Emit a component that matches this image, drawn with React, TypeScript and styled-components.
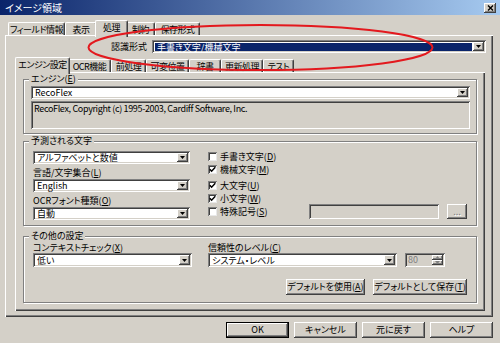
import React from "react";
import styled, { createGlobalStyle, css } from "styled-components";

const GlobalStyle = createGlobalStyle`
  * { box-sizing: border-box; }
  html, body { margin: 0; padding: 0; background: #d4d0c8; }
  body {
    font-family: "Noto Sans CJK JP", "Liberation Sans", sans-serif;
    font-size: 9px;
    color: #000;
    font-feature-settings: "palt" 1;
  }
  u { text-underline-offset: 1px; }
`;

const raised = css`
  background: #d4d0c8;
  box-shadow: inset -1px -1px #404040, inset 1px 1px #ffffff, inset -2px -2px #808080;
`;

const sunken = css`
  box-shadow: inset 1px 1px #808080, inset -1px -1px #ffffff, inset 2px 2px #404040,
    inset -2px -2px #d4d0c8;
`;

const Window = styled.div`
  position: relative;
  width: 500px;
  height: 343px;
  overflow: hidden;
  background: #d4d0c8;
  display: flex;
  flex-direction: column;
`;

const TitleBar = styled.div`
  flex: none;
  height: 15px;
  display: flex;
  align-items: center;
  justify-content: space-between;
  padding: 0 4px 0 5px;
  background: linear-gradient(90deg, #0a246a 0%, #a6caf0 100%);
  color: #fff;
  font-size: 10px;
  line-height: 15px;
`;

const CloseButton = styled.div`
  width: 12px;
  height: 10px;
  ${raised}
  display: flex;
  align-items: center;
  justify-content: center;
`;

const Body = styled.div`
  flex: 1;
  display: flex;
  flex-direction: column;
  padding: 5px 7px 0 5px;
`;

const TabStrip = styled.div<{ $pl: number; $mt?: number }>`
  flex: none;
  display: flex;
  align-items: flex-end;
  height: 15px;
  padding-left: ${(p) => p.$pl}px;
  margin-top: ${(p) => p.$mt ?? 0}px;
`;

const Tab = styled.div<{ $w: number; $active?: boolean }>`
  flex: none;
  display: flex;
  align-items: center;
  justify-content: center;
  white-space: nowrap;
  line-height: 11px;
  letter-spacing: -0.5px;
  background: #d4d0c8;
  border-top: 1px solid #fff;
  border-left: 1px solid #fff;
  border-right: 1px solid #404040;
  box-shadow: inset -1px 0 #808080;
  border-radius: 2px 2px 0 0;
  width: ${(p) => p.$w}px;
  height: 13px;
  ${(p) =>
    p.$active &&
    css`
      position: relative;
      z-index: 1;
      width: ${p.$w + 4}px;
      height: 17px;
      margin: 0 -2px -2px;
      padding-bottom: 3px;
    `}
`;

const Panel = styled.div<{ $pad: string; $h?: number }>`
  display: flex;
  flex-direction: column;
  ${(p) => (p.$h ? `height: ${p.$h}px; flex: none;` : `flex: 1;`)}
  padding: ${(p) => p.$pad};
  box-shadow: inset 1px 1px #fff, inset -1px -1px #404040, inset -2px -2px #808080;
`;

const FormatRow = styled.div`
  flex: none;
  display: flex;
  justify-content: flex-end;
  align-items: center;
  gap: 5px;
  height: 13px;
  margin-right: -1px;
  white-space: nowrap;
`;

const ComboBox = styled.div<{ $w?: number; $h: number }>`
  flex: none;
  display: flex;
  align-items: stretch;
  width: ${(p) => (p.$w ? `${p.$w}px` : "auto")};
  height: ${(p) => p.$h}px;
  padding: 2px;
  background: #fff;
  ${sunken}
`;

const ComboValue = styled.div<{ $sel?: boolean }>`
  flex: 1;
  min-width: 0;
  display: flex;
  align-items: center;
  padding: 0 2px;
  white-space: nowrap;
  line-height: 9px;
  ${(p) =>
    p.$sel &&
    css`
      background: #0a246a;
      color: #fff;
      margin: 1px 1px 0 1px;
    `}
`;

const ComboArrow = styled.div`
  flex: none;
  width: 11px;
  ${raised}
  display: flex;
  align-items: center;
  justify-content: center;
`;

const InfoBox = styled.div`
  flex: none;
  height: 28px;
  margin-top: 2px;
  padding: 3px 3px;
  line-height: 10px;
  letter-spacing: -0.35px;
  white-space: nowrap;
  ${sunken}
`;

const Group = styled.div<{ $mt: number }>`
  flex: none;
  display: flex;
  flex-direction: column;
  margin: ${(p) => p.$mt}px 1px 0 0;
  border: 1px solid #808080;
  box-shadow: inset 1px 1px #fff, 1px 1px #fff;
`;

const GroupTitle = styled.div`
  align-self: flex-start;
  margin: -7px 0 0 5px;
  padding: 0 2px;
  height: 12px;
  line-height: 12px;
  background: #d4d0c8;
  white-space: nowrap;
`;

const GroupBody = styled.div<{ $pad: string; $row?: boolean; $gap?: number }>`
  display: flex;
  flex-direction: ${(p) => (p.$row ? "row" : "column")};
  gap: ${(p) => p.$gap ?? 0}px;
  padding: ${(p) => p.$pad};
`;

const Column = styled.div<{ $w?: number; $mt?: number }>`
  display: flex;
  flex-direction: column;
  ${(p) => (p.$w ? `width: ${p.$w}px; flex: none;` : `flex: 1; min-width: 0;`)}
  margin-top: ${(p) => p.$mt ?? 0}px;
`;

const FieldLabel = styled.div<{ $h: number; $pt?: number }>`
  height: ${(p) => p.$h}px;
  padding-top: ${(p) => p.$pt ?? 0}px;
  line-height: ${(p) => p.$h - (p.$pt ?? 0)}px;
  white-space: nowrap;
`;

const CheckRow = styled.div<{ $mt?: number }>`
  height: 13px;
  display: flex;
  align-items: center;
  gap: 3px;
  white-space: nowrap;
  margin-top: ${(p) => p.$mt ?? 0}px;
`;

const CheckBox = styled.div`
  flex: none;
  width: 9px;
  height: 9px;
  background: #fff;
  box-shadow: inset 1px 1px #808080, inset -1px -1px #e8e8e8, inset 2px 2px #404040;
  display: flex;
  align-items: center;
  justify-content: center;
`;

const DisabledField = styled.div<{ $w: number }>`
  flex: none;
  width: ${(p) => p.$w}px;
  height: 15px;
  margin-left: auto;
  background: #d4d0c8;
  ${sunken}
`;

const TinyButton = styled.div`
  flex: none;
  width: 20px;
  height: 15px;
  margin-left: 5px;
  ${raised}
  display: flex;
  align-items: center;
  justify-content: center;
  color: #808080;
  text-shadow: 1px 1px #fff;
  line-height: 9px;
`;

const FieldGrid = styled.div`
  display: grid;
  grid-template-columns: 159px 1fr;
  column-gap: 16px;
`;

const InlineRow = styled.div<{ $gap: number }>`
  display: flex;
  align-items: center;
  gap: ${(p) => p.$gap}px;
`;

const Spin = styled.div`
  flex: none;
  width: 40px;
  height: 14px;
  padding: 2px;
  display: flex;
  background: #d4d0c8;
  ${sunken}
`;

const SpinValue = styled.div`
  flex: 1;
  color: #808080;
  line-height: 10px;
  padding-left: 1px;
`;

const SpinButtons = styled.div`
  flex: none;
  width: 11px;
  display: flex;
  flex-direction: column;
`;

const SpinButton = styled.div`
  flex: 1;
  ${raised}
  display: flex;
  align-items: center;
  justify-content: center;
`;

const ButtonRow = styled.div<{ $mt: number; $gap: number }>`
  flex: none;
  display: flex;
  justify-content: flex-end;
  gap: ${(p) => p.$gap}px;
  margin-top: ${(p) => p.$mt}px;
`;

const Button = styled.div<{ $w: number; $default?: boolean }>`
  flex: none;
  width: ${(p) => p.$w}px;
  height: 16px;
  display: flex;
  align-items: center;
  justify-content: center;
  white-space: nowrap;
  line-height: 10px;
  ${raised}
  ${(p) =>
    p.$default &&
    css`
      box-shadow: inset 0 0 0 1px #000, inset -2px -2px #404040, inset 2px 2px #fff,
        inset -3px -3px #808080;
    `}
`;

const Annotation = styled.svg`
  position: absolute;
  left: 0;
  top: 0;
  width: 500px;
  height: 343px;
  pointer-events: none;
  z-index: 5;
`;

const ArrowGlyph = ({ color = "#000" }: { color?: string }) => (
  <svg width="5" height="3" viewBox="0 0 5 3">
    <polygon points="0,0 5,0 2.5,3" fill={color} />
  </svg>
);

const UpGlyph = () => (
  <svg width="5" height="3" viewBox="0 0 5 3">
    <polygon points="0,3 5,3 2.5,0" fill="#808080" />
  </svg>
);

const CheckGlyph = () => (
  <svg width="7" height="7" viewBox="0 0 7 7">
    <polyline points="0.8,3.2 2.6,5.2 6.3,1.2" fill="none" stroke="#000" strokeWidth="1.5" />
  </svg>
);

const CloseGlyph = () => (
  <svg width="7" height="6" viewBox="0 0 7 6">
    <path d="M1 0.5 L6 5.5 M6 0.5 L1 5.5" stroke="#000" strokeWidth="1.4" />
  </svg>
);

const Combo = ({ w, h, value, sel }: { w?: number; h: number; value: string; sel?: boolean }) => (
  <ComboBox $w={w} $h={h}>
    <ComboValue $sel={sel}>{value}</ComboValue>
    <ComboArrow>
      <ArrowGlyph />
    </ComboArrow>
  </ComboBox>
);

const outerTabs = [
  { label: "フィールド情報", w: 57 },
  { label: "表示", w: 32 },
  { label: "処理", w: 29, active: true },
  { label: "制約", w: 29 },
  { label: "保存形式", w: 45 },
];

const innerTabs = [
  { label: "エンジン設定", w: 51, active: true },
  { label: "OCR機能", w: 43 },
  { label: "前処理", w: 35 },
  { label: "可変位置", w: 43 },
  { label: "辞書", w: 32 },
  { label: "更新処理", w: 42 },
  { label: "テスト", w: 31 },
];

export default function App() {
  return (
    <>
      <GlobalStyle />
      <Window>
        <TitleBar>
          <span>イメージ領域</span>
          <CloseButton>
            <CloseGlyph />
          </CloseButton>
        </TitleBar>
        <Body>
          <TabStrip $pl={3}>
            {outerTabs.map((t) => (
              <Tab key={t.label} $w={t.w} $active={t.active}>
                {t.label}
              </Tab>
            ))}
          </TabStrip>
          <Panel $h={282} $pad="5px 8px 6px 10px">
            <FormatRow>
              <span>認識形式</span>
              <Combo w={334} h={13} value="手書き文字/機械文字" sel />
            </FormatRow>
            <TabStrip $pl={2} $mt={4}>
              {innerTabs.map((t) => (
                <Tab key={t.label} $w={t.w} $active={t.active}>
                  {t.label}
                </Tab>
              ))}
            </TabStrip>
            <Panel $pad="7px 7px 0 8px">
              <Group $mt={0}>
                <GroupTitle>
                  エンジン(<u>E</u>)
                </GroupTitle>
                <GroupBody $pad="1px 6px 4px 7px">
                  <Combo h={13} value="RecoFlex" />
                  <InfoBox>RecoFlex, Copyright (c) 1995-2003, Cardiff Software, Inc.</InfoBox>
                </GroupBody>
              </Group>

              <Group $mt={7}>
                <GroupTitle>予測される文字</GroupTitle>
                <GroupBody $pad="4px 9px 5px 9px" $row $gap={18}>
                  <Column $w={157}>
                    <Combo h={13} value="アルファベットと数値" />
                    <FieldLabel $h={15} $pt={3}>
                      言語/文字集合(<u>L</u>)
                    </FieldLabel>
                    <Combo h={13} value="English" />
                    <FieldLabel $h={15} $pt={3}>
                      OCRフォント種類(<u>O</u>)
                    </FieldLabel>
                    <Combo h={13} value="自動" />
                  </Column>
                  <Column $mt={-1}>
                    <CheckRow>
                      <CheckBox />
                      <span>
                        手書き文字(<u>D</u>)
                      </span>
                    </CheckRow>
                    <CheckRow>
                      <CheckBox>
                        <CheckGlyph />
                      </CheckBox>
                      <span>
                        機械文字(<u>M</u>)
                      </span>
                    </CheckRow>
                    <CheckRow $mt={3}>
                      <CheckBox>
                        <CheckGlyph />
                      </CheckBox>
                      <span>
                        大文字(<u>U</u>)
                      </span>
                    </CheckRow>
                    <CheckRow>
                      <CheckBox>
                        <CheckGlyph />
                      </CheckBox>
                      <span>
                        小文字(<u>W</u>)
                      </span>
                    </CheckRow>
                    <CheckRow>
                      <CheckBox />
                      <span>
                        特殊記号(<u>S</u>)
                      </span>
                      <DisabledField $w={130} />
                      <TinyButton>...</TinyButton>
                    </CheckRow>
                  </Column>
                </GroupBody>
              </Group>

              <Group $mt={10}>
                <GroupTitle>その他の設定</GroupTitle>
                <GroupBody $pad="0 9px 7px 9px">
                  <FieldGrid>
                    <Column>
                      <FieldLabel $h={11}>
                        コンテキストチェック(<u>X</u>)
                      </FieldLabel>
                      <Combo h={14} value="低い" />
                    </Column>
                    <Column>
                      <FieldLabel $h={11}>
                        信頼性のレベル(<u>C</u>)
                      </FieldLabel>
                      <InlineRow $gap={8}>
                        <Combo w={189} h={14} value="システム・レベル" />
                        <Spin>
                          <SpinValue>80</SpinValue>
                          <SpinButtons>
                            <SpinButton>
                              <UpGlyph />
                            </SpinButton>
                            <SpinButton>
                              <ArrowGlyph color="#808080" />
                            </SpinButton>
                          </SpinButtons>
                        </Spin>
                      </InlineRow>
                    </Column>
                  </FieldGrid>
                  <ButtonRow $mt={12} $gap={8}>
                    <Button $w={79}>
                      デフォルトを使用(<u>A</u>)
                    </Button>
                    <Button $w={94}>
                      デフォルトとして保存(<u>T</u>)
                    </Button>
                  </ButtonRow>
                </GroupBody>
              </Group>
            </Panel>
          </Panel>
          <ButtonRow $mt={5} $gap={5}>
            <Button $w={63} $default>
              OK
            </Button>
            <Button $w={63}>キャンセル</Button>
            <Button $w={63}>元に戻す</Button>
            <Button $w={63}>ヘルプ</Button>
          </ButtonRow>
        </Body>
        <Annotation viewBox="0 0 500 343">
          <ellipse cx="260.5" cy="47.5" rx="172" ry="22.5" fill="none" stroke="#e3191e" strokeWidth="2" />
        </Annotation>
      </Window>
    </>
  );
}
